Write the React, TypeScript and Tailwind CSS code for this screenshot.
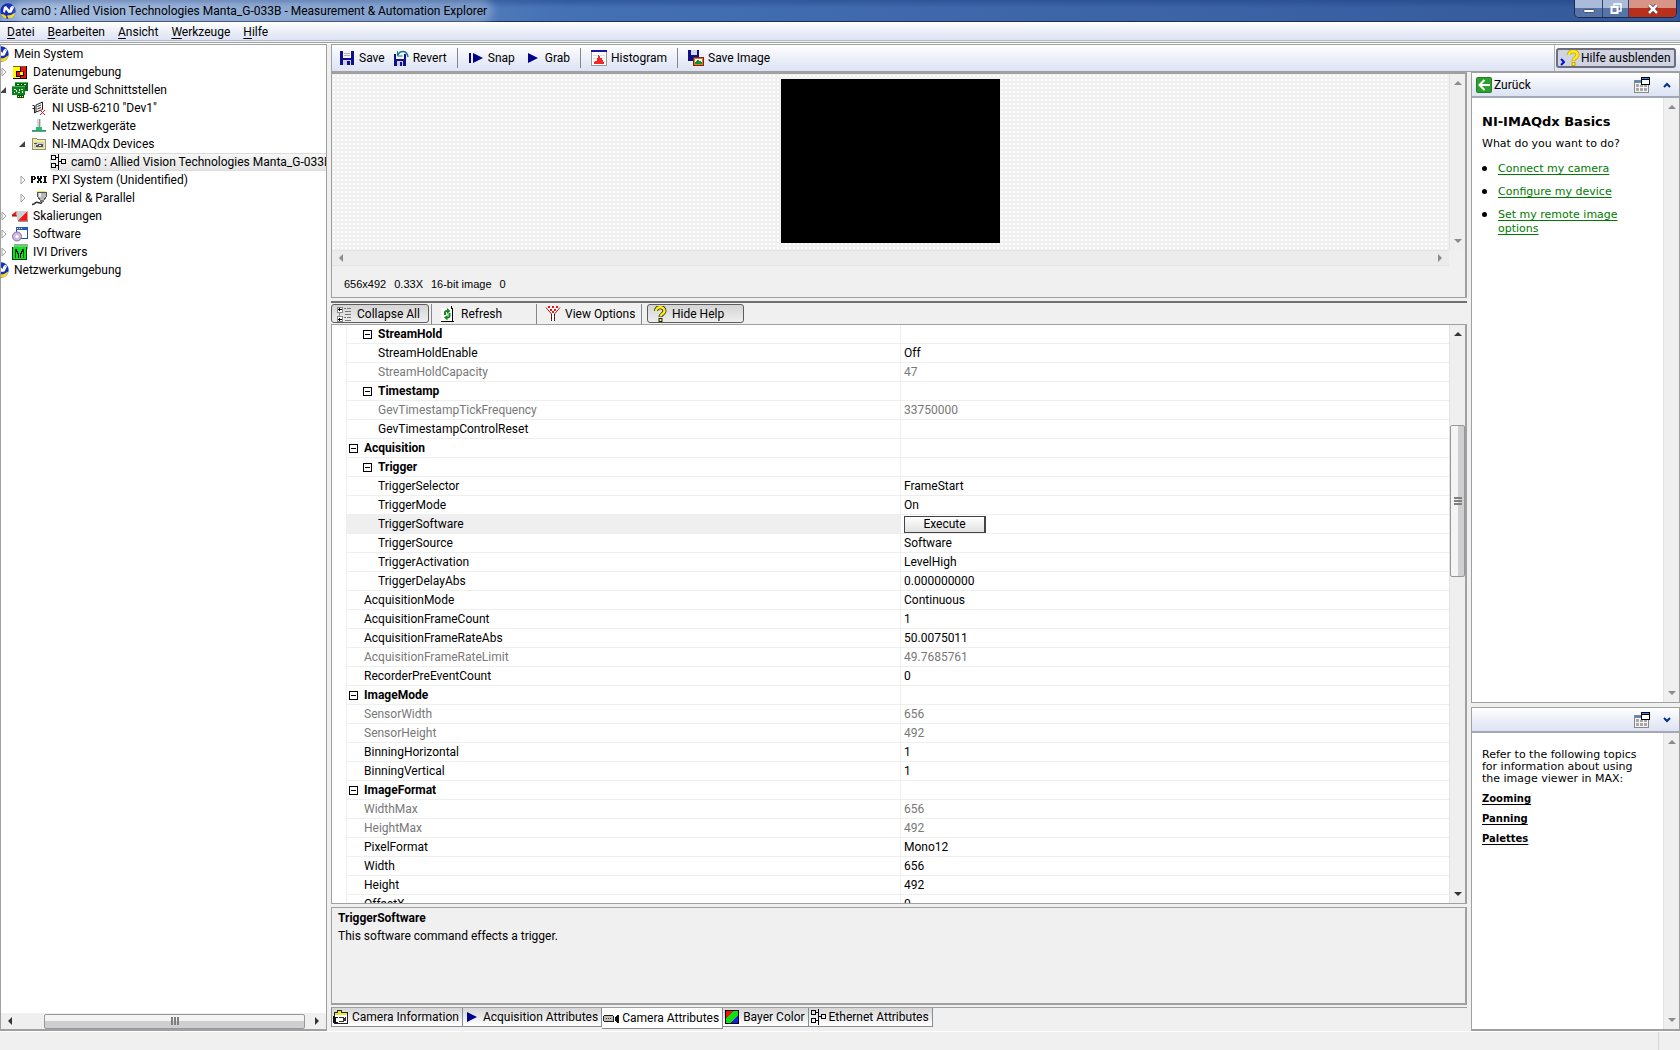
import type { ReactNode } from "react";
import clsx from "clsx";

interface IconProps {
  children: ReactNode;
  className?: string;
  size?: number;
}

// Small pixel-style icon on a 16x16 grid
function Icon({ children, className, size = 16 }: IconProps) {
  return (
    <svg
      viewBox="0 0 16 16"
      width={size}
      height={size}
      shapeRendering="crispEdges"
      aria-hidden="true"
      className={clsx("shrink-0", className)}
    >
      {children}
    </svg>
  );
}

function NiGlobe() {
  return (
    <svg viewBox="0 0 16 16" width={16} height={16} aria-hidden="true" className="shrink-0">
      <circle cx="8" cy="8" r="7.7" fill="#1530b8" />
      <path d="M3 8.500l1-4.500 2-1 3.500 4 1-3 2.500-1.500 1 2-2.500 5L8.500 10 6 6.500 4.500 10z" fill="#fff" />
      <path d="M11.500 3l2 1.500-1.500 1z" fill="#b8c4f4" />
      <path d="M7 12.500l4-.5 4.200-2.500C15 13 12 15.700 8.500 15.700z" fill="#f8d820" />
      <path d="M1 11l3 .5 2.500 2-.5 2C4 15 2 13.500 1 11z" fill="#f8d820" />
    </svg>
  );
}

function DataIcon() {
  return (
    <Icon>
      <path d="M1 2h13v12H1z" fill="#ffff00" />
      <path d="M8 2h6v12H8v-2H5V8h3z" fill="#f01010" />
      <path d="M8 2h1v5H8zM4 7h5v1H4zM4 7h1v5H4zM4 12h5v1H4zM8 12h1v2H8zM1 14h14v1H1zM14 2h1v13h-1z" fill="#000" />
      <path d="M8 8h3v3H8z" fill="#ffff00" />
      <path d="M11 7h1v4h-1zM8 11h4v1H8z" fill="#000" />
      <path d="M1 2h13v1H1z" fill="#806020" />
    </Icon>
  );
}

function BoardsIcon() {
  return (
    <Icon>
      <path d="M3 1h13v8H3z" fill="#0a6414" />
      <path d="M3 0h13v1H3zM0 4h13v1H0z" fill="#40b850" />
      <path d="M0 5h13v8H0z" fill="#108020" />
      <path d="M2 7h2v1H2zM4 8h1v2H4zM7 7h1v2H7zM9 7h2v1H9zM10 9h1v2h-1zM2 10h1v1H2zM6 10h2v1H6zM5 2h2v1H5zM9 2h1v1H9zM12 2h2v1h-2z" fill="#d8f8d8" />
      <path d="M5 13h7v3H5z" fill="#085010" />
      <path d="M6 14h1v1H6zM8 14h1v1H8zM10 14h1v1h-1z" fill="#f0f060" />
    </Icon>
  );
}

function UsbDeviceIcon() {
  return (
    <svg viewBox="0 0 16 16" width={16} height={16} aria-hidden="true" className="shrink-0">
      <path d="M5 5l6.500-3v7.500L5 12V5zM3.500 6v7L5 12" fill="#fff" stroke="#222" />
      <path d="M6.500 6.500l3.500-1.500M6.500 9l3.500-1.500M1.500 5.500h2M1.500 8.500h2" fill="none" stroke="#222" />
      <path d="M9 10l5 5M14 10l-5 5" stroke="#e01010" />
    </svg>
  );
}

function NetworkDeviceIcon() {
  return (
    <Icon>
      <path d="M6 1h4v9H6z" fill="#d4d8dc" />
      <path d="M8 1h1v9H8z" fill="#909090" />
      <path d="M5 9h6v3H5z" fill="#20c070" />
      <path d="M1 12h14v1H1z" fill="#18a860" />
      <path d="M1 13h14v1H1z" fill="#8890a0" />
    </Icon>
  );
}

function ImaqFolderIcon() {
  return (
    <Icon>
      <path d="M1 2h5v1h9v11H1z" fill="#909080" />
      <path d="M2 3h4v1h8v9H2z" fill="#f8f090" />
      <path d="M3 6h10v6H3z" fill="#d0d0c4" />
      <path d="M3 7h3v1H3zM5 9h2v2H5zM7 8h5v3H7z" fill="#555" />
      <path d="M8 9h2v1H8z" fill="#fff" />
    </Icon>
  );
}

function TopologyIcon() {
  return (
    <Icon>
      <path
        d="M1 2h4v4H1zM1 10h4v4H1zM11 6h4v4h-4zM5 4h3M5 12h3M8 0v16M8 8h3"
        transform="translate(.5 -.5)"
        fill="none"
        stroke="#000"
      />
    </Icon>
  );
}

function PxiIcon() {
  return (
    <Icon>
      <path
        d="M0 4h4v1h1v2H4v1H2v3H0zM6 4h2v2h1V4h2v3h-1v2h1v2H9V9H8v2H6V9h1V7H6zM12 4h4v1h-1v5h1v1h-4v-1h1V5h-1z"
        fill="#111"
      />
      <path d="M2 5h1v2H2z" fill="#fff" />
    </Icon>
  );
}

function SerialIcon() {
  return (
    <Icon>
      <path d="M6 2h9v5l-2 3H9L7 7z" fill="#b8b8b8" stroke="#555" />
      <path d="M6 1h9v1H6z" fill="#f0e850" />
      <path d="M8 3h2v4H8z" fill="#eee" />
      <path d="M9 10h4v2H9z" fill="#777" />
      <path d="M11 12c-1 3-4-.5-6 .5s-1 2-4 2" fill="none" stroke="#333" shapeRendering="auto" strokeWidth="1.500" />
    </Icon>
  );
}

function ScaleIcon() {
  return (
    <svg viewBox="0 0 16 16" width={16} height={16} aria-hidden="true" className="shrink-0">
      <path d="M0 6.500L4.500 3v5H0z" fill="#f01818" />
      <path d="M5 3h10l-9 9.500H5z" fill="#c8d4d4" />
      <path d="M6 12.500L15.500 3v9.500z" fill="#f01818" />
      <path d="M0 8h5M6 13h10" stroke="#801010" />
    </svg>
  );
}

function SoftwareIcon() {
  return (
    <Icon>
      <path d="M4 1h11v11H4z" fill="#fff" stroke="#2050b0" />
      <path d="M4 1h12v3H4z" fill="#2858c8" />
      <path d="M5 2h1v1H5zM7 2h1v1H7zM9 2h1v1H9z" fill="#f8e840" />
      <circle cx="5" cy="10.500" r="4.500" fill="#d0b8e0" stroke="#8870a0" shapeRendering="auto" />
      <circle cx="5" cy="10.500" r="1.500" fill="#fff" shapeRendering="auto" />
    </Icon>
  );
}

function IviIcon() {
  return (
    <Icon>
      <path d="M2 1h14v4H2z" fill="#60d070" />
      <path d="M2 0h14v1H2z" fill="#a0a0a0" />
      <path d="M0 3h15v13H0z" fill="#10e020" />
      <path d="M0 15h15v1H0zM0 3h1v13H0zM14 3h1v13h-1zM3 5h1v9H3zM11 5h1v9h-1z" fill="#064010" />
      <path d="M4 5h1v2h1v2h1v5H6v-4H5V8H4zM10 5h1v3h-1v2H9v4H8V9h1V7h1z" fill="#000" />
    </Icon>
  );
}

function SaveIcon() {
  return (
    <Icon>
      <path d="M1 1h14v14H1z" fill="#10108c" />
      <path d="M4 1h8v7H4z" fill="#f4f4f4" />
      <path d="M5 3h6v1H5zM5 5h6v1H5z" fill="#b0b0b0" />
      <path d="M4 10h8v5H4z" fill="#d0d0e0" />
      <path d="M8 11h3v4H8z" fill="#10108c" />
    </Icon>
  );
}

function RevertIcon() {
  return (
    <Icon>
      <path d="M1 4h12v12H1z" fill="#10108c" />
      <path d="M3 4h8v5H3z" fill="#f4f4f4" />
      <path d="M4 11h6v5H4z" fill="#d0d0e0" />
      <path d="M7 12h2v4H7z" fill="#10108c" />
      <path d="M5 5c2-5 9-5 10 2" fill="none" stroke="#187890" strokeWidth="1.500" shapeRendering="auto" />
      <path d="M4.500 1v5h5" fill="none" stroke="#187890" shapeRendering="auto" />
    </Icon>
  );
}

function SnapIcon() {
  return (
    <Icon>
      <path d="M1 3h2v10H1z" fill="#00008c" />
      <path d="M5 3l10 5-10 5z" fill="#00008c" shapeRendering="auto" />
    </Icon>
  );
}

function PlayIcon() {
  return (
    <Icon>
      <path d="M3 3l10 5-10 5z" fill="#00008c" shapeRendering="auto" />
    </Icon>
  );
}

function HistogramIcon() {
  return (
    <Icon>
      <path d="M0 0h16v16H0z" fill="#999" />
      <path d="M1 2h14v13H1z" fill="#fff" />
      <path d="M0 0h16v2H0z" fill="#1818a0" />
      <path d="M2 5h12v1H2zM2 8h12v1H2zM2 11h12v1H2z" fill="#ddd" />
      <path d="M3 12h1v2H3zM4 11h2v3H4zM6 8h1v6H6zM7 5h1v9H7zM8 6h1v8H8zM9 8h2v6H9zM11 10h1v4h-1zM12 12h1v2h-1z" fill="#f02828" />
    </Icon>
  );
}

function SaveImageIcon() {
  return (
    <Icon>
      <path d="M0 0h11v11H0z" fill="#10108c" />
      <path d="M3 0h6v5H3z" fill="#d8d8e0" />
      <path d="M5 7h11v9H5z" fill="#802800" />
      <path d="M6 8h9v7H6z" fill="#e07830" />
      <path d="M7 9h7v5H7z" fill="#fff" />
      <path d="M7 12l3-2 4 2v2H7z" fill="#109030" />
    </Icon>
  );
}

function QuestionMark({ outlined }: { outlined?: boolean }) {
  return (
    <svg viewBox="0 0 16 16" width={16} height={16} aria-hidden="true" className="shrink-0">
      <path
        d="M4 5c0-5 8.500-5 8.500 0 0 3-4 3-4 6"
        fill="none"
        stroke={outlined ? "#222" : "#c8a800"}
        strokeWidth="4"
      />
      <path d="M6.500 12h4v4h-4z" fill={outlined ? "#222" : "#c8a800"} />
      <path d="M4 5c0-5 8.500-5 8.500 0 0 3-4 3-4 5.500" fill="none" stroke="#ffee10" strokeWidth="2.500" />
      <path d="M7.500 13h2v2h-2z" fill="#ffee10" />
    </svg>
  );
}

function CollapseIcon() {
  return (
    <Icon>
      <path d="M1 1h5v5H1zM1 10h5v5H1zM3 6v4" transform="translate(.5 .5)" fill="#fff" stroke="#888" />
      <path d="M3 3h2v1H3zM2 3h4v1H2zM3 2h1v3H3zM2 13h4v1H2zM3 12h1v3H3z" fill="#000" />
      <path d="M8 2h2v1H8zM11 2h4v1h-4zM9 5h6v1H9zM9 8h6v1H9zM8 11h2v1H8zM11 11h4v1h-4zM9 14h6v1H9z" fill="#777" />
    </Icon>
  );
}

function RefreshIcon() {
  return (
    <Icon>
      <path d="M1 2h11v13H1z" fill="#fff" />
      <path d="M11 0h1v2h1v13h-1V3h-1zM1 15h13v1H1z" fill="#000" />
      <path
        d="M4 9V6.500C4 5 5 4 7 4V2l3.500 3L7 8V6H6v3zM10.500 7v3c0 1.500-1 2.500-3 2.500v2L4 11.500 7.500 9v1.500h1V7z"
        fill="#108a20"
        shapeRendering="auto"
      />
    </Icon>
  );
}

function FilterIcon() {
  return (
    <svg viewBox="0 0 16 16" width={16} height={16} aria-hidden="true" className="shrink-0">
      <path d="M1 1.500h14L10 8v7H7V8z" fill="#fff" />
      <path d="M1 1.500L6.500 8v7M15 1.500L9.500 8v7" fill="none" stroke="#c01010" />
      <path d="M6.500 8v7M9.500 8v7" stroke="#222" strokeDasharray="2 1" />
      <path d="M3 0h2v2H3zM7 0h2v2H7zM11 0h2v2h-2zM5 3h2v2H5zM9 3h2v2H9zM7 5h2v2H7z" fill="#f01010" />
    </svg>
  );
}

function FolderCameraIcon() {
  return (
    <Icon>
      <path d="M1 3h3V1h5v2h6v12H1z" fill="#222" />
      <path d="M2 4h3V2h3v2h6v10H2z" fill="#fff" />
      <path d="M2 4h12v2H2zM5 2h3v2H5z" fill="#f0e830" />
      <path d="M0 7h2v1h3v1H3v4h2v1H0z" fill="#111" />
      <path d="M6 8h5v1h1v-1h1v4h-2v1H6v-1h4V9H6z" fill="#333" />
    </Icon>
  );
}

function CameraIcon() {
  return (
    <Icon>
      <path d="M1 5h9v1h1v6H1v-1H0V6h1z" fill="#222" />
      <path d="M1 6h9v5H1z" fill="#c0c0b8" />
      <path d="M3 8h1v1H3zM5 8h1v1H5zM7 8h1v1H7z" fill="#333" />
      <path d="M12 7h1V6h1V5h2v8h-2v-1h-1v-1h-1z" fill="#111" />
    </Icon>
  );
}

function BayerIcon() {
  return (
    <Icon>
      <path d="M1 1h14v14H1z" fill="#000" />
      <path d="M2 2h12v12H2z" fill="#10e010" />
      <path d="M2 2h7L2 10z" fill="#f01010" />
      <path d="M14 6v8H6z" fill="#1020e0" />
    </Icon>
  );
}

function BackIcon() {
  return (
    <svg viewBox="0 0 16 16" width={16} height={16} aria-hidden="true" className="shrink-0">
      <rect x=".5" y=".5" width="15" height="15" rx="1" fill="#2ca02c" stroke="#2a7a2a" />
      <path d="M14 8H4M8.500 3L3.500 8l5 5" fill="none" stroke="#fff" strokeWidth="2" />
    </svg>
  );
}

function UndockIcon() {
  return (
    <Icon>
      <path d="M0 3h15v13H0z" fill="#888" />
      <path d="M1 6h13v9H1z" fill="#f4f4f4" />
      <path d="M1 4h6v1H1z" fill="#2890e8" />
      <path d="M2 7h3v3H2zM6 8h3v2H6zM10 8h3v2h-3zM2 11h3v3H2zM6 11h3v3H6zM10 11h3v3h-3z" fill="#a8a8a8" />
      <path d="M7 0h9v8H7z" fill="#000" />
      <path d="M8 1h7v1H8z" fill="#2890e8" />
      <path d="M8 3h7v4H8z" fill="#fff" />
    </Icon>
  );
}

function Chevron({ down }: { down?: boolean }) {
  return (
    <svg viewBox="0 0 8 8" width={8} height={8} aria-hidden="true">
      <path d={down ? "M1 2l3 3 3-3" : "M1 6l3-3 3 3"} fill="none" stroke="#003090" strokeWidth="2" />
    </svg>
  );
}

function Arrow({ dir, dim }: { dir: "up" | "down" | "left" | "right"; dim?: boolean }) {
  const paths = {
    up: "M0 6l4-4 4 4z",
    down: "M0 2l4 4 4-4z",
    left: "M6 0L2 4l4 4z",
    right: "M2 0l4 4-4 4z",
  };
  return (
    <svg viewBox="0 0 8 8" width={8} height={8} aria-hidden="true">
      <path d={paths[dir]} fill={dim ? "#8c8c8c" : "#333"} />
    </svg>
  );
}

// Vertical scroll bar without a thumb
function EmptyScrollbar() {
  return (
    <div className="flex w-4 shrink-0 flex-col items-center justify-between border-l border-[#e3e3e3] bg-[#efefef] py-[5px]">
      <Arrow dir="up" dim />
      <Arrow dir="down" dim />
    </div>
  );
}

const treeIndent = ["pl-0", "pl-[19px]", "pl-[38px]", "pl-[57px]"];

interface TreeNode {
  label: string;
  level: number;
  icon: ReactNode;
  state?: "open" | "closed";
  selected?: boolean;
}

const tree: TreeNode[] = [
  { label: "Mein System", level: 0, icon: <NiGlobe /> },
  { label: "Datenumgebung", level: 1, icon: <DataIcon />, state: "closed" },
  { label: "Geräte und Schnittstellen", level: 1, icon: <BoardsIcon />, state: "open" },
  { label: 'NI USB-6210 "Dev1"', level: 2, icon: <UsbDeviceIcon /> },
  { label: "Netzwerkgeräte", level: 2, icon: <NetworkDeviceIcon /> },
  { label: "NI-IMAQdx Devices", level: 2, icon: <ImaqFolderIcon />, state: "open" },
  { label: "cam0 : Allied Vision Technologies Manta_G-033B", level: 3, icon: <TopologyIcon />, selected: true },
  { label: "PXI System (Unidentified)", level: 2, icon: <PxiIcon />, state: "closed" },
  { label: "Serial & Parallel", level: 2, icon: <SerialIcon />, state: "closed" },
  { label: "Skalierungen", level: 1, icon: <ScaleIcon />, state: "closed" },
  { label: "Software", level: 1, icon: <SoftwareIcon />, state: "closed" },
  { label: "IVI Drivers", level: 1, icon: <IviIcon />, state: "closed" },
  { label: "Netzwerkumgebung", level: 0, icon: <NiGlobe /> },
];

function DeviceTree() {
  return (
    <aside className="flex w-[327px] shrink-0 flex-col border border-b-2 border-[#a0a0a0] bg-white">
      <ul className="min-h-0 flex-1 overflow-hidden">
        {tree.map((node) => (
          <li key={node.label} className={clsx("-ml-6 flex h-[18px] items-center", treeIndent[node.level])}>
            <span className="flex w-4 shrink-0 justify-center">
              {node.state === "closed" && (
                <svg viewBox="0 0 8 10" width={8} height={10} aria-hidden="true">
                  <path d="M2 1l4 4-4 4z" fill="#fff" stroke="#a0a0a0" />
                </svg>
              )}
              {node.state === "open" && (
                <svg viewBox="0 0 8 8" width={8} height={8} aria-hidden="true">
                  <path d="M6 1v6H0z" fill="#444" />
                </svg>
              )}
            </span>
            <span
              className={clsx(
                "flex h-[18px] flex-1 items-center gap-[5px] whitespace-nowrap",
                node.selected && "rounded-l-sm bg-linear-to-b from-[#f8f8f8] to-[#e4e4e4] ring-1 ring-inset ring-[#dcdcdc]",
              )}
            >
              {node.icon}
              {node.label}
            </span>
          </li>
        ))}
      </ul>
      <div className="flex h-4 items-center bg-[#efefef] px-[5px]">
        <Arrow dir="left" />
        <div className="mr-2 ml-[30px] flex h-[15px] flex-1 items-center justify-center gap-px rounded-xs border border-[#979797] bg-linear-to-b from-[#f4f4f4] from-50% to-[#cfcfd2] to-50%">
          <span className="h-2 w-0.5 bg-[#808080]" />
          <span className="h-2 w-0.5 bg-[#808080]" />
          <span className="h-2 w-0.5 bg-[#808080]" />
        </div>
        <Arrow dir="right" />
      </div>
    </aside>
  );
}

const barGradient = "bg-linear-to-b from-white via-[#eef1f9] via-45% to-[#dde3f4]";

function ToolButton({ icon, children }: { icon: ReactNode; children: ReactNode }) {
  return (
    <button type="button" className="flex h-full items-center gap-1 px-1 whitespace-nowrap">
      {icon}
      {children}
    </button>
  );
}

function Divider({ spaced }: { spaced?: boolean }) {
  return <span className={clsx("h-5 w-px shrink-0 bg-[#85878f]", spaced && "mx-[6px]")} />;
}

interface Property {
  name: string;
  value?: string;
  level: 1 | 2;
  group?: boolean;
  readOnly?: boolean;
  command?: boolean;
}

const properties: Property[] = [
  { name: "StreamHold", level: 2, group: true },
  { name: "StreamHoldEnable", value: "Off", level: 2 },
  { name: "StreamHoldCapacity", value: "47", level: 2, readOnly: true },
  { name: "Timestamp", level: 2, group: true },
  { name: "GevTimestampTickFrequency", value: "33750000", level: 2, readOnly: true },
  { name: "GevTimestampControlReset", level: 2 },
  { name: "Acquisition", level: 1, group: true },
  { name: "Trigger", level: 2, group: true },
  { name: "TriggerSelector", value: "FrameStart", level: 2 },
  { name: "TriggerMode", value: "On", level: 2 },
  { name: "TriggerSoftware", value: "Execute", level: 2, command: true },
  { name: "TriggerSource", value: "Software", level: 2 },
  { name: "TriggerActivation", value: "LevelHigh", level: 2 },
  { name: "TriggerDelayAbs", value: "0.000000000", level: 2 },
  { name: "AcquisitionMode", value: "Continuous", level: 1 },
  { name: "AcquisitionFrameCount", value: "1", level: 1 },
  { name: "AcquisitionFrameRateAbs", value: "50.0075011", level: 1 },
  { name: "AcquisitionFrameRateLimit", value: "49.7685761", level: 1, readOnly: true },
  { name: "RecorderPreEventCount", value: "0", level: 1 },
  { name: "ImageMode", level: 1, group: true },
  { name: "SensorWidth", value: "656", level: 1, readOnly: true },
  { name: "SensorHeight", value: "492", level: 1, readOnly: true },
  { name: "BinningHorizontal", value: "1", level: 1 },
  { name: "BinningVertical", value: "1", level: 1 },
  { name: "ImageFormat", level: 1, group: true },
  { name: "WidthMax", value: "656", level: 1, readOnly: true },
  { name: "HeightMax", value: "492", level: 1, readOnly: true },
  { name: "PixelFormat", value: "Mono12", level: 1 },
  { name: "Width", value: "656", level: 1 },
  { name: "Height", value: "492", level: 1 },
  { name: "OffsetX", value: "0", level: 1 },
];

function PropertyRow({ item }: { item: Property }) {
  return (
    <tr className={clsx("h-[19px]", item.readOnly && "text-[#787878]")}>
      <th
        scope="row"
        className={clsx(
          "border-r border-b border-l border-[#efefef] p-0 text-left",
          item.group ? "font-bold" : "font-normal",
          item.command && "bg-[#efefef]",
        )}
      >
        <div className={clsx("flex h-[18px] items-center", item.level === 1 ? "pl-[2px]" : "pl-4")}>
          <span className="w-[15px] shrink-0">
            {item.group && (
              <svg viewBox="0 0 9 9" width={9} height={9} shapeRendering="crispEdges" aria-hidden="true">
                <path d="M.5 .5h8v8h-8zM2 4.500h5" fill="none" stroke="#000" />
              </svg>
            )}
          </span>
          {item.name}
        </div>
      </th>
      <td className="border-b border-[#efefef] p-0 pl-[3px]">
        {item.command ? (
          <button
            type="button"
            className="block h-[17px] w-[82px] border border-r-2 border-[#444] bg-linear-to-b from-white to-[#e2e2e2] leading-[15px]"
          >
            {item.value}
          </button>
        ) : (
          item.value
        )}
      </td>
    </tr>
  );
}

function ImageViewer() {
  return (
    <section className="flex h-[226px] shrink-0 flex-col border-t-2 border-r-2 border-b border-l border-[#a0a0a0] bg-[#f0f0f0]">
      <div className="flex h-[176px]">
        <div className="flex flex-1 justify-center bg-[radial-gradient(#ffffff_1px,transparent_1px)] bg-size-[4px_4px] pt-[5px]">
          <div className="h-[164px] w-[219px] bg-black" />
        </div>
        <EmptyScrollbar />
      </div>
      <div className="mr-4 flex h-4 items-center justify-between border-y border-[#e3e3e3] bg-[#ececec] px-[5px]">
        <Arrow dir="left" dim />
        <Arrow dir="right" dim />
      </div>
      <div className="flex flex-1 items-center gap-2 px-3 pt-[5px] font-['Liberation_Sans',sans-serif] text-[11px]">
        <span>656x492</span>
        <span>0.33X</span>
        <span>16-bit image</span>
        <span>0</span>
      </div>
    </section>
  );
}

const pressed =
  "flex items-center rounded-[3px] border border-[#5c5c5c] bg-linear-to-b from-[#d4d4d4] to-[#eeeeee] whitespace-nowrap";

const tabs = [
  { label: "Camera Information", icon: <FolderCameraIcon /> },
  { label: "Acquisition Attributes", icon: <PlayIcon /> },
  { label: "Camera Attributes", icon: <CameraIcon />, active: true },
  { label: "Bayer Color", icon: <BayerIcon /> },
  { label: "Ethernet Attributes", icon: <TopologyIcon /> },
];

function CameraPanel() {
  return (
    <main className="flex min-w-0 flex-1 flex-col">
      <ImageViewer />
      <div className="mt-[3px] flex h-[23px] shrink-0 items-center border-t-2 border-[#707070] bg-[#f0f0f0]">
        <button type="button" className={clsx(pressed, "h-[19px] w-[98px] gap-[5px] px-1")}>
          <CollapseIcon />
          Collapse All
        </button>
        <span className="w-[2px]" />
        <Divider />
        <button type="button" className="flex w-[104px] items-center gap-[5px] pl-2">
          <RefreshIcon />
          Refresh
        </button>
        <Divider />
        <button type="button" className="flex w-[104px] items-center gap-1 pl-2 whitespace-nowrap">
          <FilterIcon />
          View Options
        </button>
        <Divider />
        <button type="button" className={clsx(pressed, "ml-[5px] h-[19px] w-[97px] gap-1 px-1")}>
          <QuestionMark outlined />
          Hide Help
        </button>
      </div>

      <div className="flex min-h-0 flex-1 border border-r-2 border-[#a0a0a0] bg-white">
        <div className="min-h-0 flex-1 overflow-hidden pl-[14px]">
          <table className="w-full table-fixed border-separate border-spacing-0">
            <colgroup>
              <col className="w-[555px]" />
              <col />
            </colgroup>
            <tbody>
              {properties.map((item) => (
                <PropertyRow key={item.name} item={item} />
              ))}
            </tbody>
          </table>
        </div>
        <div className="flex w-4 shrink-0 flex-col items-center border-l border-[#e3e3e3] bg-[#efefef] py-[5px]">
          <Arrow dir="up" />
          <div className="mt-[87px] flex h-[152px] w-[15px] flex-col items-center justify-center gap-px rounded-xs border border-[#979797] bg-linear-to-r from-[#f4f4f4] from-50% to-[#cfcfd2] to-50%">
            <span className="h-0.5 w-2 bg-[#808080]" />
            <span className="h-0.5 w-2 bg-[#808080]" />
            <span className="h-0.5 w-2 bg-[#808080]" />
          </div>
          <span className="flex-1" />
          <Arrow dir="down" />
        </div>
      </div>

      <section className="mt-[3px] h-[98px] shrink-0 border border-r-2 border-b-2 border-[#a0a0a0] px-[6px] py-[1px]">
        <h2 className="leading-[18px] font-bold">TriggerSoftware</h2>
        <p className="leading-[18px]">This software command effects a trigger.</p>
      </section>

      <div className="mt-[2px] h-[24px] shrink-0 border-t border-[#a0a0a0]">
        <div role="tablist" className="flex items-start">
          {tabs.map((tab) => (
            <button
              key={tab.label}
              type="button"
              role="tab"
              aria-selected={Boolean(tab.active)}
              className={clsx(
                "flex items-center gap-[3px] border-r border-b border-[#8a8c94] pr-[3px] pl-px whitespace-nowrap first:border-l",
                tab.active ? "h-[21px] bg-white" : "h-[19px] bg-linear-to-b from-[#d6d6d6] to-white",
              )}
            >
              {tab.icon}
              {tab.label}
            </button>
          ))}
        </div>
      </div>
    </main>
  );
}

function HelpHeader({ title, down }: { title?: string; down?: boolean }) {
  return (
    <div className={clsx("flex h-[25px] shrink-0 items-center border-b-2 border-[#a3a7b8] pr-2 pl-1", barGradient)}>
      {title && (
        <button type="button" className="flex items-center gap-0.5">
          <BackIcon />
          {title}
        </button>
      )}
      <button type="button" aria-label="Undock" className="ml-auto">
        <UndockIcon />
      </button>
      <button type="button" aria-label="Toggle panel" className="ml-[13px]">
        <Chevron down={down} />
      </button>
    </div>
  );
}

function HelpPane() {
  return (
    <aside className="flex w-[209px] shrink-0 flex-col">
      <section className="flex min-h-0 flex-1 flex-col border border-[#a0a0a0] bg-white">
        <HelpHeader title="Zurück" />
        <div className="flex min-h-0 flex-1 font-['DejaVu_Sans',Verdana,sans-serif] text-[11px]">
          <div className="flex-1 pt-4 pr-4 pl-[10px]">
            <h2 className="text-[13px] leading-4 font-bold whitespace-nowrap">NI-IMAQdx Basics</h2>
            <p className="mt-[7px] leading-[14px] whitespace-nowrap">What do you want to do?</p>
            <ul className="mt-[11px] flex flex-col gap-[9px]">
              {["Connect my camera", "Configure my device", "Set my remote image options"].map((topic) => (
                <li key={topic} className="flex leading-[14px]">
                  <span className="mt-1 mr-[11px] size-[5px] shrink-0 rounded-full bg-black" />
                  <a href="#" className="text-[#007a00] underline underline-offset-2">
                    {topic}
                  </a>
                </li>
              ))}
            </ul>
          </div>
          <EmptyScrollbar />
        </div>
      </section>

      <section className="mt-1 flex h-[324px] shrink-0 flex-col border border-b-2 border-[#a0a0a0] bg-white">
        <HelpHeader down />
        <div className="flex min-h-0 flex-1 font-['DejaVu_Sans',Verdana,sans-serif]">
          <div className="flex-1 pt-4 pr-4 pl-[10px]">
            <p className="text-[11px] leading-3">
              Refer to the following topics for information about using the image viewer in MAX:
            </p>
            <ul className="mt-[7px] flex flex-col gap-[6px] text-[10px]">
              {["Zooming", "Panning", "Palettes"].map((topic) => (
                <li key={topic} className="leading-[14px]">
                  <a href="#" className="font-bold underline underline-offset-2">
                    {topic}
                  </a>
                </li>
              ))}
            </ul>
          </div>
          <EmptyScrollbar />
        </div>
      </section>
    </aside>
  );
}

function TitleBar() {
  return (
    <header className="flex h-[22px] shrink-0 items-center border-b border-[#1d2f58] bg-linear-to-r from-[#8dabd8] via-[#4470b4] via-34% to-[#34599a] shadow-[inset_0_4px_4px_rgba(20,55,120,0.35)]">
      <NiGlobe />
      <h1 className="ml-[5px] rounded-full bg-white/25 whitespace-nowrap shadow-[0_0_8px_6px_rgba(255,255,255,0.25)]">
        cam0 : Allied Vision Technologies Manta_G-033B - Measurement &amp; Automation Explorer
      </h1>
      <div className="mr-[3px] ml-auto flex h-[18px] self-start overflow-hidden rounded-b-[5px] border border-t-0 border-[#1d2c4c]">
        <button
          type="button"
          aria-label="Minimize"
          className="flex w-[28px] items-center justify-center border-r border-[#2c4270] bg-linear-to-b from-[#a9bbd8] from-50% to-[#5674a6] to-50%"
        >
          <span className="mt-1 h-1 w-3 rounded-xs border border-[#44587c] bg-white" />
        </button>
        <button
          type="button"
          aria-label="Restore"
          className="flex w-[26px] items-center justify-center border-r border-[#2c4270] bg-linear-to-b from-[#a9bbd8] from-50% to-[#5674a6] to-50%"
        >
          <svg viewBox="0 0 12 12" width={12} height={12} aria-hidden="true">
            <path d="M4 1h7v7H4z" fill="none" stroke="#fff" strokeWidth="1.500" />
            <path d="M1.500 4h6v6h-6z" fill="#7088b0" stroke="#fff" strokeWidth="2" />
          </svg>
        </button>
        <button
          type="button"
          aria-label="Close"
          className="flex w-[47px] items-center justify-center bg-linear-to-b from-[#d99488] from-50% to-[#b8301c] to-50%"
        >
          <svg viewBox="0 0 12 10" width={12} height={10} aria-hidden="true">
            <path d="M2 1l8 8M10 1l-8 8" stroke="#5a3030" strokeWidth="4" />
            <path d="M2 1l8 8M10 1l-8 8" stroke="#fff" strokeWidth="2.500" />
          </svg>
        </button>
      </div>
    </header>
  );
}

const menus = ["Datei", "Bearbeiten", "Ansicht", "Werkzeuge", "Hilfe"];

export default function App() {
  return (
    <div className="flex h-screen flex-col bg-[#f0f0f0] font-[Roboto,'Segoe_UI',sans-serif] text-[12px] leading-4 text-black">
      <TitleBar />
      <nav className={clsx("flex h-[19px] shrink-0 items-center gap-[13px] border-b border-[#b4bace] px-[7px] pt-px", barGradient)}>
        {menus.map((menu) => (
          <button key={menu} type="button">
            <span className="underline underline-offset-2">{menu[0]}</span>
            {menu.slice(1)}
          </button>
        ))}
      </nav>
      <div className="mt-px h-[2px] shrink-0 border-t border-[#a0a0a0] bg-white" />

      <div className="flex min-h-0 flex-1 gap-1">
        <DeviceTree />
        <div className="flex min-w-0 flex-1 flex-col">
          <div
            role="toolbar"
            className={clsx("flex h-[28px] shrink-0 items-center border-t border-b border-l border-[#a0a0a0] pr-1 pl-[3px]", barGradient)}
          >
            <ToolButton icon={<SaveIcon />}>Save</ToolButton>
            <ToolButton icon={<RevertIcon />}>Revert</ToolButton>
            <Divider spaced />
            <ToolButton icon={<SnapIcon />}>Snap</ToolButton>
            <span className="w-0.5" />
            <ToolButton icon={<PlayIcon />}>Grab</ToolButton>
            <Divider spaced />
            <ToolButton icon={<HistogramIcon />}>Histogram</ToolButton>
            <Divider spaced />
            <ToolButton icon={<SaveImageIcon />}>Save Image</ToolButton>
            <span className="mr-px ml-auto h-full w-px bg-[#b0b2bc]" />
            <button
              type="button"
              className="flex h-[20px] w-[120px] items-center rounded-[3px] border-2 border-[#6c6e78] bg-[#cfd3e2] px-[2px] whitespace-nowrap"
            >
              <svg viewBox="0 0 5 8" width={5} height={8} aria-hidden="true" className="shrink-0 self-end">
                <path d="M1 1l3 3-3 3" fill="none" stroke="#0010e0" strokeWidth="2" />
              </svg>
              <QuestionMark />
              Hilfe ausblenden
            </button>
          </div>
          <div className="flex min-h-0 flex-1 gap-1">
            <CameraPanel />
            <HelpPane />
          </div>
        </div>
      </div>

      <footer className="flex h-[19px] shrink-0 justify-end border-t border-white pr-[21px]">
        <span className="w-px bg-[#d8d8d8]" />
      </footer>
    </div>
  );
}
